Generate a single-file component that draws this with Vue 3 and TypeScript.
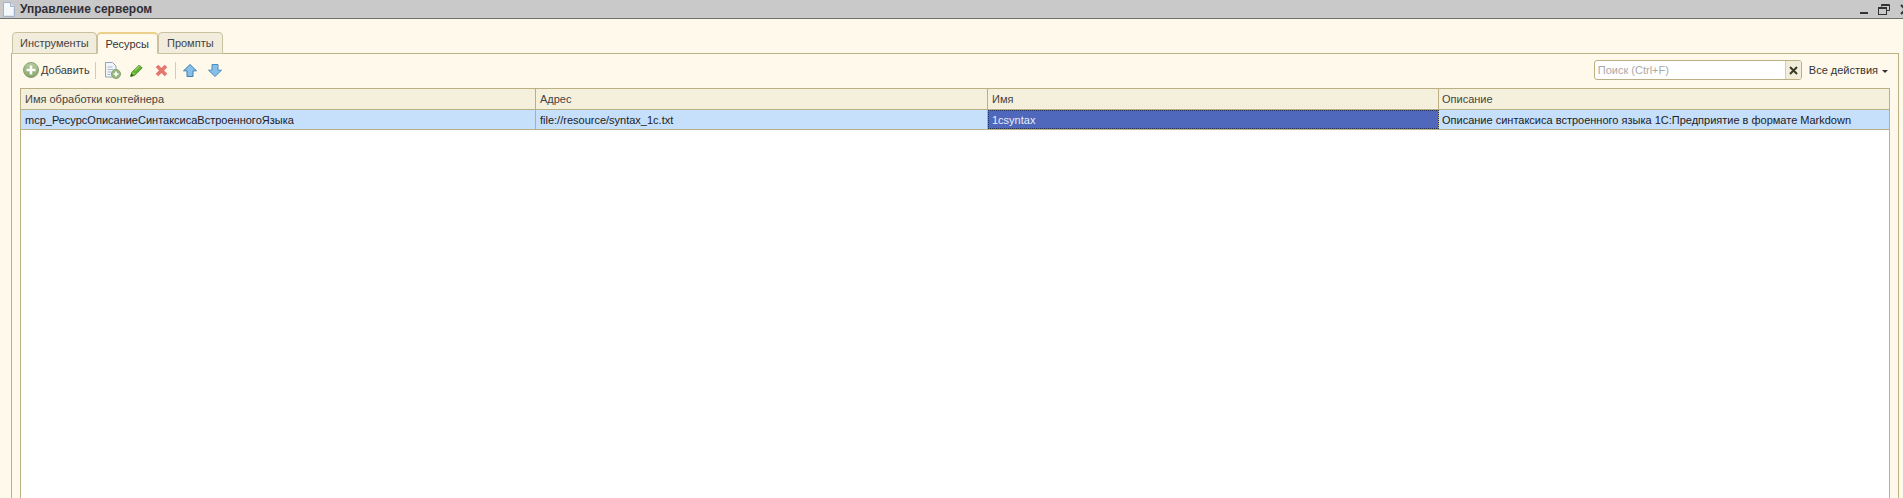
<script setup lang="ts">
const columns: string[] = ['Имя обработки контейнера', 'Адрес', 'Имя', 'Описание']
const cells: string[] = [
  'mcp_РесурсОписаниеСинтаксисаВстроенногоЯзыка',
  'file://resource/syntax_1c.txt',
  '1csyntax',
  'Описание синтаксиса встроенного языка 1С:Предприятие в формате Markdown',
]
const tabs: string[] = ['Инструменты', 'Ресурсы', 'Промпты']
</script>

<template>
  <div class="window">
    <header class="titlebar">
      <svg class="doc" width="12" height="15" viewBox="0 0 12 15">
        <path d="M.5.5h7l4 4v10H.5z" fill="#f4f8fd" stroke="#a3b4c8" />
        <path d="M7.500.5v4h4" fill="#dbe5f1" stroke="#a3b4c8" />
        <path d="M1.500 13.500h9V6" fill="none" stroke="#dbe6f3" />
      </svg>
      <span class="title">Управление сервером</span>
      <div class="winbtns">
        <span class="min"></span>
        <svg width="12" height="11" viewBox="0 0 12 11" fill="none" stroke="#333">
          <path d="M3.500 2.500V.5h8v6h-3" /><path d="M3.500 1.500h8" />
          <rect x=".5" y="3.500" width="8" height="7" /><path d="M.5 4.500h8" />
        </svg>
        <svg width="12" height="11" viewBox="0 0 12 11" fill="none" stroke="#333" stroke-width="2">
          <path d="M1 1l9 9M10 1l-9 9" />
        </svg>
      </div>
    </header>

    <main class="body">
      <nav class="tabs">
        <span v-for="(t, i) in tabs" :key="t" class="tab" :class="{ active: i === 1 }">{{ t }}</span>
      </nav>
      <section class="panel">
        <div class="toolbar">
          <svg class="ic-add" width="16" height="16" viewBox="0 0 16 16">
            <defs>
              <linearGradient id="addFill" x1="0" y1="0" x2="0" y2="1">
                <stop offset="0" stop-color="#b7cd9e" />
                <stop offset="1" stop-color="#84a566" />
              </linearGradient>
            </defs>
            <circle cx="8" cy="8" r="7.500" fill="url(#addFill)" stroke="#8aa078" />
            <path d="M8 3.500v9M3.500 8h9" stroke="#fff" stroke-width="2.600" />
          </svg>
          <span class="add-label">Добавить</span>
          <i class="sep"></i>
          <svg class="ic ic-doc" width="17" height="17" viewBox="0 0 17 17">
            <path d="M1.500.5h7l3.500 3.500v11H1.500z" fill="#f2f6fb" stroke="#8fa4bb" />
            <path d="M3.500 5h5M3.500 7.500h6M3.500 10h4M3.500 12.500h3" stroke="#a4b7ca" />
            <circle cx="12" cy="12" r="4.500" fill="#9ab87f" stroke="#86a26f" />
            <path d="M12 9.500v5M9.500 12h5" stroke="#fff" stroke-width="1.600" />
          </svg>
          <svg class="ic ic-pen" width="13" height="13" viewBox="0 0 13 13">
            <path d="M.6 12.400l1-3.800L9.200 1l3 3-7.600 7.400z" fill="#62b42e" stroke="#3f8a1c" stroke-width=".8" />
            <path d="M3 8.500l1.700 1.700M5 6.500l5-5" stroke="#cfe9b4" stroke-width=".9" />
            <path d="M.6 12.400l.7-2.700 2 2z" fill="#234f10" />
          </svg>
          <svg class="ic ic-del" width="13" height="13" viewBox="0 0 13 13">
            <path d="M2 2l9 9M11 2l-9 9" stroke="#e4766e" stroke-width="3.600" />
          </svg>
          <i class="sep sep2"></i>
          <svg class="ic ic-up" width="14" height="13" viewBox="0 0 14 13">
            <path d="M7 .5l6.500 6.300H10v5.700H4V6.800H.5z" fill="#86c0ea" stroke="#3f7fae" />
          </svg>
          <svg class="ic ic-down" width="14" height="13" viewBox="0 0 14 13">
            <path d="M7 12.500l6.500-6.300H10V.5H4v5.700H.5z" fill="#86c0ea" stroke="#4d8dbd" />
          </svg>
          <div class="spacer"></div>
          <div class="search">
            <span class="placeholder">Поиск (Ctrl+F)</span>
            <span class="clear">
              <svg width="9" height="9" viewBox="0 0 9 9"><path d="M1 1l7 7M8 1L1 8" stroke="#3a3a2a" stroke-width="2" /></svg>
            </span>
          </div>
          <span class="actions">Все действия<i class="caret"></i></span>
        </div>
        <div class="table">
          <div class="row head">
            <div v-for="c in columns" :key="c" class="cell">{{ c }}</div>
          </div>
          <div class="row data">
            <div v-for="(c, i) in cells" :key="c" class="cell" :class="{ current: i === 2 }">{{ c }}</div>
          </div>
        </div>
      </section>
    </main>
  </div>
</template>

<style>
html, body { margin: 0; background: #fff9ec; }
</style>

<style scoped>
.window {
  width: 1903px;
  height: 498px;
  overflow: hidden;
  display: flex;
  flex-direction: column;
  background: #fff9ec;
  font-family: "Liberation Sans", Arial, sans-serif;
  font-size: 11px;
  color: #2b2b2b;
}
.titlebar {
  height: 18px;
  flex: none;
  display: flex;
  align-items: center;
  background: #c9c9c9;
  border-bottom: 1px solid #6f6f6f;
  padding-left: 3px;
}
.doc { margin-right: 5px; }
.title { font-weight: 700; font-size: 12px; color: #2f2f38; }
.winbtns {
  margin-left: auto;
  display: flex;
  align-items: center;
  gap: 10px;
  margin-right: -9px;
}
.min { width: 8px; height: 2px; background: #333; margin-top: 8px; }
.body {
  flex: 1;
  display: flex;
  flex-direction: column;
  padding: 13px 4px 0 11px;
  min-height: 0;
}
.tabs {
  display: flex;
  height: 22px;
  flex: none;
  margin-bottom: -1px;
  margin-left: 1px;
  position: relative;
  z-index: 1;
}
.tab {
  box-sizing: border-box;
  height: 22px;
  display: flex;
  align-items: center;
  padding: 0 8px;
  background: #f1ecdc;
  border: 1px solid #c9c1a0;
  border-radius: 4px 4px 0 0;
  color: #444;
}
.tab:first-child { padding: 0 7px; }
.tab.active {
  background: #fff9ec;
  border-bottom-color: #fff9ec;
  border-top: 2px solid #ecd08a;
  color: #333;
}
.panel {
  flex: 1;
  display: flex;
  flex-direction: column;
  border: 1px solid #bbb083;
  border-bottom: 0;
  padding: 0 8px;
  min-height: 0;
}
.toolbar {
  box-sizing: border-box;
  height: 34px;
  padding-bottom: 2px;
  flex: none;
  display: flex;
  align-items: center;
}
.ic-add { margin-left: 3px; margin-right: 2px; }
.add-label { margin-right: 5px; color: #3b3b3b; }
.sep { width: 1px; height: 17px; background: #d3ccb2; }
.ic-doc { margin-left: 8px; }
.ic-pen { margin-left: 9px; }
.ic-del { margin-left: 12px; }
.sep2 { margin-left: 7px; }
.ic-up { margin-left: 7px; }
.ic-down { margin-left: 11px; }
.spacer { flex: 1; }
.search {
  box-sizing: border-box;
  width: 208px;
  height: 20px;
  display: flex;
  border: 1px solid #bbb083;
  border-radius: 3px;
  background: #fff;
  overflow: hidden;
}
.placeholder { flex: 1; padding-left: 3px; line-height: 18px; color: #a9a9a9; }
.clear {
  width: 15px;
  display: flex;
  align-items: center;
  justify-content: center;
  background: #f2edda;
  border-left: 1px solid #d6cfae;
}
.actions { margin-left: 7px; margin-right: 2px; color: #333; display: flex; align-items: center; }
.caret {
  margin-left: 4px;
  margin-top: 2px;
  border: 3px solid transparent;
  border-top-color: #333;
  border-bottom: 0;
}
.table {
  flex: 1;
  background: #fff;
  border: 1px solid #bbb083;
  border-bottom: 0;
  min-height: 0;
}
.row {
  display: grid;
  grid-template-columns: 515px 452px 451px 1fr;
}
.head { height: 21px; background: #f4f0dc; border-bottom: 1px solid #bbb083; box-sizing: border-box; }
.data { height: 20px; background: #c6dffb; border-bottom: 1px solid #bbb083; box-sizing: border-box; color: #222; }
.cell {
  padding-left: 4px;
  display: flex;
  align-items: center;
  border-right: 1px solid #bbb083;
  white-space: nowrap;
  overflow: hidden;
}
.cell:last-child { border-right: 0; padding-left: 3px; }
.head .cell { color: #444; }
.current {
  background: #4f68bb;
  color: #e9edf8;
  outline: 1px dotted #20305f;
  outline-offset: -1px;
}
</style>
